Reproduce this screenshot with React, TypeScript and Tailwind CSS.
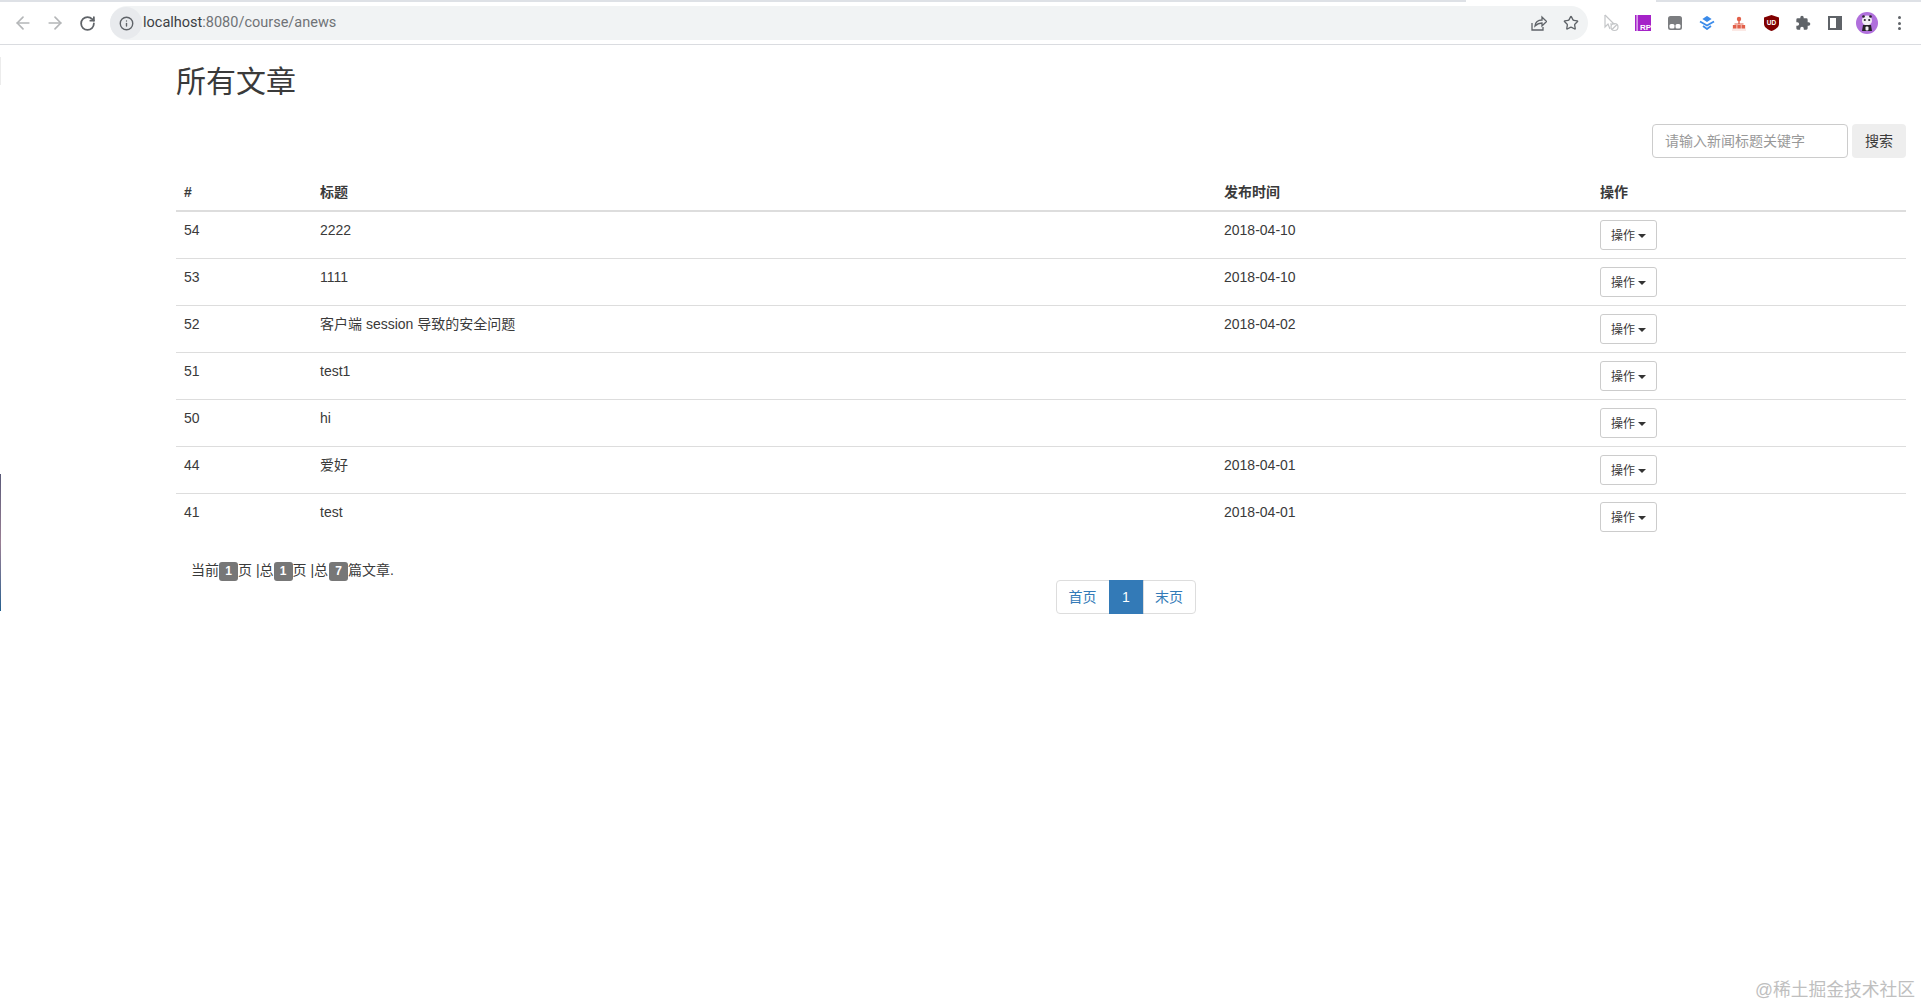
import { ArrowLeft, ArrowRight, Info, RotateCw, Star } from 'lucide-react';

const rows = [
  { id: 54, title: '2222', date: '2018-04-10' },
  { id: 53, title: '1111', date: '2018-04-10' },
  { id: 52, title: '客户端 session 导致的安全问题', date: '2018-04-02' },
  { id: 51, title: 'test1', date: '' },
  { id: 50, title: 'hi', date: '' },
  { id: 44, title: '爱好', date: '2018-04-01' },
  { id: 41, title: 'test', date: '2018-04-01' },
];

function ToolbarIcon({ children }: { children: React.ReactNode }) {
  return <div className="flex w-8 h-8 items-center justify-center">{children}</div>;
}

function BrowserBar() {
  return (
    <div className="relative h-[45px] border-b border-[#dadce0] bg-white">
      <div className="absolute left-0 top-0 h-[2px] w-[1466px] bg-[#dee1e6]" />
      <div className="absolute right-0 top-0 h-[2px] w-[265px] bg-[#dee1e6]" />
      <div className="flex h-full items-center pt-[2px]">
        <div className="flex w-[110px] items-center pl-[7px]">
          <ToolbarIcon><ArrowLeft size={20} strokeWidth={2} className="text-[#b4b6b8]" /></ToolbarIcon>
          <ToolbarIcon><ArrowRight size={20} strokeWidth={2} className="text-[#b4b6b8]" /></ToolbarIcon>
          <ToolbarIcon><RotateCw size={17} strokeWidth={2.5} className="text-[#5f6368]" /></ToolbarIcon>
        </div>
        <div className="flex h-[34px] w-[1478px] items-center rounded-full bg-[#f1f3f4]">
          <div className="flex h-[32px] w-[32px] items-center justify-center rounded-full bg-[#e8eaed]">
            <Info size={15} strokeWidth={2.2} className="text-[#5f6368]" />
          </div>
          <span className="ml-[1px] text-[14.5px] text-[#6f7276] font-['Roboto',sans-serif]">
            <span className="text-[#3c4043]">localhost</span>:8080/course/anews
          </span>
          <div className="ml-auto mr-[1px] flex">
            <ToolbarIcon>
              <svg width="16" height="16" viewBox="0 0 16 16" fill="none" stroke="#5f6368" strokeWidth="1.3">
                <path d="M1 8v7h11v-3" />
                <path d="M4 11c.5-4 3-6 7-6V2l4.500 4.500L11 11V8c-3 0-5 1-7 3z" />
              </svg>
            </ToolbarIcon>
            <ToolbarIcon><Star size={16} strokeWidth={2} className="text-[#5f6368]" /></ToolbarIcon>
          </div>
        </div>
        <div className="ml-[7px] flex">
          <ToolbarIcon>
            <svg width="16" height="18" viewBox="0 0 16 18" fill="none" stroke="#c4c6c8" strokeWidth="1.2">
              <path d="M2 1v12l3-3 2 5" />
              <path d="M2 1l9 9H7" />
              <circle cx="11.500" cy="13" r="3.500" />
              <path d="M9 15.500l5-5" />
            </svg>
          </ToolbarIcon>
          <ToolbarIcon>
            <svg width="16" height="16" viewBox="0 0 16 16">
              <rect width="16" height="16" fill="#a522c8" />
              <rect x="1.500" width="1.200" height="16" fill="#ecd0f5" />
              <text x="5" y="14.500" fontSize="8" fontWeight="700" fill="#fff" fontFamily="Liberation Sans, sans-serif">RP</text>
            </svg>
          </ToolbarIcon>
          <ToolbarIcon>
            <svg width="14" height="14" viewBox="0 0 14 14">
              <rect width="14" height="14" rx="2.500" fill="#7b7d80" />
              <rect x="1.500" y="8" width="5" height="4.500" rx="1.500" fill="#fff" />
              <rect x="7.500" y="8" width="5" height="4.500" rx="1.500" fill="#fff" />
            </svg>
          </ToolbarIcon>
          <ToolbarIcon>
            <svg width="16" height="14" viewBox="0 0 16 14" fill="none" stroke="#3b8bea" strokeWidth="1.800">
              <path d="M1 5.500l7 4 7-4" />
              <path d="M4 10l4 3 4-3" />
              <path d="M8 1l3 2-3 2-3-2z" fill="#3b8bea" />
            </svg>
          </ToolbarIcon>
          <ToolbarIcon>
            <svg width="14" height="15" viewBox="0 0 14 15" fill="#e2604a">
              <rect y="9" width="14" height="6" fill="#fbe9e5" />
              <circle cx="7" cy="3" r="2.200" />
              <rect x="6.300" y="4" width="1.400" height="4" />
              <rect x="1" y="9" width="3.500" height="3.500" />
              <rect x="5.300" y="9" width="3.500" height="3.500" />
              <rect x="9.500" y="9" width="3.500" height="3.500" />
              <rect x="2.500" y="7.500" width="9" height="1" />
            </svg>
          </ToolbarIcon>
          <ToolbarIcon>
            <svg width="15" height="16" viewBox="0 0 15 16">
              <path d="M7.500 0L15 2.500V9c0 3-3.500 5.500-7.500 7C3.500 14.500 0 12 0 9V2.500z" fill="#800000" />
              <text x="7.500" y="10" textAnchor="middle" fontSize="6.500" fontWeight="700" fill="#fff" fontFamily="Liberation Sans, sans-serif">UD</text>
            </svg>
          </ToolbarIcon>
          <ToolbarIcon>
            <svg width="16" height="16" viewBox="0 0 24 24" fill="#5f6368">
              <path d="M20.500 11H19V7a2 2 0 0 0-2-2h-4V3.500a2.500 2.500 0 0 0-5 0V5H4a2 2 0 0 0-2 2v3.800h1.500a2.700 2.700 0 0 1 0 5.400H2V20a2 2 0 0 0 2 2h3.800v-1.500a2.700 2.700 0 0 1 5.400 0V22H17a2 2 0 0 0 2-2v-4h1.500a2.500 2.500 0 0 0 0-5z" />
            </svg>
          </ToolbarIcon>
          <ToolbarIcon>
            <div className="flex h-[14px] w-[14px] border-2 border-[#5f6368]">
              <div className="ml-auto h-full w-[4px] bg-[#5f6368]" />
            </div>
          </ToolbarIcon>
          <ToolbarIcon>
            <svg width="22" height="22" viewBox="0 0 22 22">
              <circle cx="11" cy="11" r="11" fill="#b06fdc" />
              <circle cx="11" cy="8.500" r="5" fill="#f2eef5" />
              <path d="M7 13h8l1 6H6z" fill="#26222a" />
              <rect x="9.500" y="14.500" width="3" height="4" rx="1" fill="#f2eef5" />
              <circle cx="8.800" cy="8" r="1.100" fill="#26222a" />
              <circle cx="13.200" cy="8" r="1.100" fill="#26222a" />
              <circle cx="7.500" cy="4.500" r="1.300" fill="#26222a" />
              <circle cx="14.500" cy="4.500" r="1.300" fill="#26222a" />
            </svg>
          </ToolbarIcon>
          <ToolbarIcon>
            <div className="flex flex-col gap-[2.500px]">
              <div className="h-[3px] w-[3px] rounded-full bg-[#5f6368]" />
              <div className="h-[3px] w-[3px] rounded-full bg-[#5f6368]" />
              <div className="h-[3px] w-[3px] rounded-full bg-[#5f6368]" />
            </div>
          </ToolbarIcon>
        </div>
      </div>
    </div>
  );
}

function Label({ children }: { children: React.ReactNode }) {
  return (
    <span className="inline-flex h-[19px] w-[19px] items-center justify-center rounded-[3px] bg-[#777] text-[12px] font-bold text-white align-middle">
      {children}
    </span>
  );
}

export default function App() {
  return (
    <div className="relative h-[1007px] overflow-hidden bg-white text-[14px] leading-[20px] text-[#3a3a3a] font-['Liberation_Sans','Noto_Sans_CJK_SC',sans-serif]">
      <BrowserBar />
      <div className="absolute left-0 top-[57px] h-[28px] w-[1px] bg-[#ececec]" />
      <div className="absolute left-0 top-[474px] h-[137px] w-[1px] bg-gradient-to-b from-[#5a5a78] via-[#9a7f94] to-[#1f5f8f]" />

      <div className="pl-[176px] pr-[15px]">
        <h1 className="pt-[20px] text-[30px] leading-[33px] font-normal">所有文章</h1>

        <div className="mt-[26px] flex justify-end gap-[4px]">
          <input
            placeholder="请输入新闻标题关键字"
            className="h-[34px] w-[196px] rounded-[4px] border border-[#ccc] px-[12px] text-[14px] placeholder:text-[#999]"
          />
          <button className="h-[34px] w-[54px] rounded-[4px] bg-[#eee] text-[14px]">搜索</button>
        </div>

        <table className="mt-[16px] w-[1730px] table-fixed border-collapse">
          <colgroup>
            <col className="w-[136px]" />
            <col className="w-[904px]" />
            <col className="w-[376px]" />
            <col className="w-[314px]" />
          </colgroup>
          <thead>
            <tr className="border-b-2 border-[#ddd] text-left">
              <th className="p-[8px] font-bold">#</th>
              <th className="p-[8px] font-bold">标题</th>
              <th className="p-[8px] font-bold">发布时间</th>
              <th className="p-[8px] font-bold">操作</th>
            </tr>
          </thead>
          <tbody>
            {rows.map((row, i) => (
              <tr key={row.id} className={i < rows.length - 1 ? 'border-b border-[#ddd]' : ''}>
                <td className="p-[8px] align-top">{row.id}</td>
                <td className="p-[8px] align-top">{row.title}</td>
                <td className="p-[8px] align-top">{row.date}</td>
                <td className="p-[8px] align-top">
                  <button className="flex h-[30px] w-[57px] items-center justify-center gap-[3px] rounded-[3px] border border-[#ccc] bg-white pt-[2px] text-[12px] leading-[18px]">
                    操作
                    <span className="h-0 w-0 border-x-[4px] border-t-[4px] border-x-transparent border-t-[#333]" />
                  </button>
                </td>
              </tr>
            ))}
          </tbody>
        </table>

        <div className="mt-[20px] h-[20px] pl-[15px]">
          当前<Label>1</Label>页 |总<Label>1</Label>页 |总<span className="ml-[1px]"><Label>7</Label></span>篇文章.
        </div>
        <div className="flex justify-center pl-[169px]">
          <div className="flex h-[34px] text-[#337ab7]">
            <a className="flex w-[54px] items-center justify-center rounded-l-[4px] border border-[#ddd]">首页</a>
            <a className="ml-[-1px] flex w-[35px] items-center justify-center border border-[#337ab7] bg-[#337ab7] text-white">1</a>
            <a className="ml-[-1px] flex w-[53px] items-center justify-center rounded-r-[4px] border border-[#ddd]">末页</a>
          </div>
        </div>
      </div>

      <div className="absolute right-[6px] top-[978px] text-[17.75px] leading-[24px] text-[#b9b9b9] opacity-90">@稀土掘金技术社区</div>
    </div>
  );
}
